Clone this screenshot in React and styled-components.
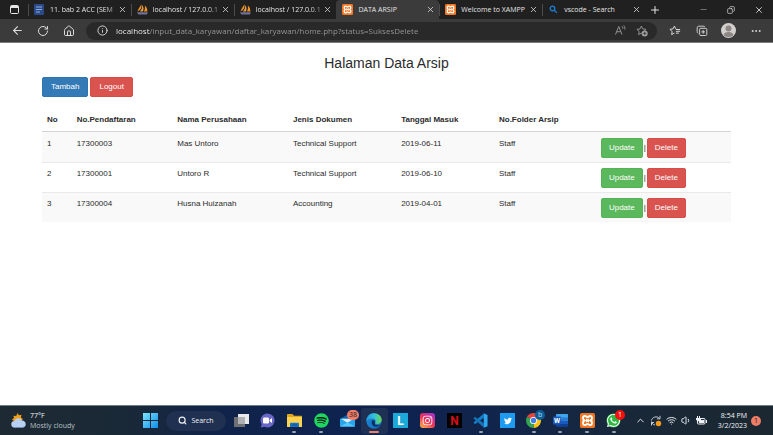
import React from "react";
import styled, { createGlobalStyle, css } from "styled-components";
import {
  ArrowLeft, RotateCw, House, Info, Plus, Minus, X, Search, Ellipsis,
  ChevronUp, Wifi, Volume1, Copy,
} from "lucide-react";
import { FaSpotify, FaWhatsapp, FaTwitter, FaInstagram } from "react-icons/fa";

const Global = createGlobalStyle`
  * { box-sizing: border-box; }
  body { margin: 0; background: #fff; }
  button { border: 0; padding: 0; background: none; color: inherit; font: inherit; cursor: pointer; }
  svg { display: block; flex: none; }
`;

const uiFont = css`
  font-family: "Open Sans", "Noto Sans", sans-serif;
`;

const Screen = styled.div`
  display: flex;
  flex-direction: column;
  min-height: 100vh;
`;

/* ---------- Browser chrome ---------- */

const TabStrip = styled.header`
  ${uiFont}
  display: flex;
  align-items: center;
  height: 19px;
  background: #202020;
  color: #e4e4e4;
  font-size: 7px;
`;

const StripButton = styled.button`
  display: grid;
  place-items: center;
  width: ${(p) => p.$width}px;
  height: 19px;
`;

const TabList = styled.nav`
  display: flex;
  flex: 0 1 617px;
  min-width: 0;
  height: 19px;
  align-items: center;
`;

const Tab = styled.div`
  display: flex;
  align-items: center;
  flex: 1 1 0;
  min-width: 0;
  height: ${(p) => (p.$active ? 19 : 12)}px;
  padding: 0 4px 0 5px;
  border-left: 1px solid ${(p) => (p.$active ? "#3b3b3b" : "#4c4c4c")};
  border-radius: ${(p) => (p.$active ? "4px 4px 0 0" : "0")};
  background: ${(p) => (p.$active ? "#3b3b3b" : "transparent")};
`;

const TabTitle = styled.button`
  flex: 1;
  min-width: 0;
  margin-left: 5px;
  white-space: nowrap;
  text-align: left;
  line-height: 12px;
  ${(p) => p.$faded && css`mask-image: linear-gradient(90deg, #000 80%, #0004);`}
`;

const WindowControls = styled.div`
  display: flex;
  margin-left: auto;
`;

const Toolbar = styled.div`
  ${uiFont}
  display: flex;
  align-items: center;
  height: 24px;
  padding: 0 4px;
  gap: 4px;
  background: #3b3b3b;
  border-bottom: 1px solid #7d7d7d;
  color: #dcdcdc;
`;

const ToolGroup = styled.div`
  display: grid;
  grid-auto-flow: column;
  grid-auto-columns: ${(p) => p.$step}px;
  place-items: center;
`;

const ToolButton = styled.button`
  display: grid;
  place-items: center;
  width: 18px;
  height: 18px;
`;

const AddressBar = styled.form`
  display: flex;
  align-items: center;
  flex: 1;
  min-width: 0;
  height: 18px;
  padding: 0 4px 0 11px;
  gap: 8px;
  border-radius: 9px;
  background: #292929;
`;

const AddressInput = styled.input`
  flex: 1;
  min-width: 0;
  border: 0;
  padding: 0;
  outline: 0;
  font-family: inherit;
  font-size: 8px;
  line-height: 14px;
  color: transparent;
  background: linear-gradient(90deg, #fff 34px, #9a9a9a 34px);
  background-clip: text;
`;

const AddressTools = styled(ToolGroup)`
  color: #9d9d9d;
`;

/* ---------- Page ---------- */

const Page = styled.main`
  flex: 1;
  padding: 12px 42px;
  background: #fff;
  color: #2b2b2b;
  font-family: "Liberation Sans", Arial, sans-serif;
  font-size: 8px;
  line-height: 12px;
`;

const Heading = styled.h1`
  margin: 0 0 6px;
  font-size: 14px;
  font-weight: 400;
  line-height: 16px;
  text-align: center;
`;

const Actions = styled.div`
  display: flex;
  align-items: center;
  gap: ${(p) => p.$gap}px;
`;

const tones = {
  primary: ["#337ab7", "#2e74ae"],
  danger: ["#d9534f", "#d84b47"],
  success: ["#5cb85c", "#55b355"],
};

const Button = styled.button`
  height: 20px;
  padding: 0 ${(p) => (p.$wide ? 8 : 7)}px;
  border: 1px solid ${(p) => tones[p.$tone][1]};
  border-radius: 2px;
  background: ${(p) => tones[p.$tone][0]};
  color: #fff;
`;

const Table = styled.table`
  width: 100%;
  margin-top: 11px;
  table-layout: fixed;
  border-collapse: separate;
  border-spacing: 0;
`;

const Col = styled.col`
  width: ${(p) => p.$share}%;
`;

const HeadCell = styled.th`
  padding: 6px 5px 5px;
  border-bottom: 1px solid #d4d4d4;
  text-align: left;
  white-space: nowrap;
`;

const Row = styled.tr`
  &:nth-child(odd) { background: #f9f9f9; }
  & + & > td { border-top-color: #e9e9e9; }
`;

const Cell = styled.td`
  padding: 5px 5px 4px;
  border-top: 1px solid transparent;
  vertical-align: top;
`;

/* ---------- Taskbar ---------- */

const Taskbar = styled.footer`
  ${uiFont}
  display: flex;
  align-items: center;
  height: 30px;
  border-top: 1px solid #6d7f86;
  background: linear-gradient(90deg, #1d2a33 0%, #1a2937 16%, #10244a 28%, #0d2250 50%, #12254a 66%, #192838 82%, #1b2831 100%);
  color: #f2f4f6;
  font-size: 7px;
  line-height: 10px;
`;

const Weather = styled.button`
  display: flex;
  align-items: center;
  flex: 1 1 137px;
  gap: 4px;
  padding-left: 11px;
  text-align: left;
`;

const Dim = styled.span`
  color: #b9c2c9;
`;

const Lines = styled.span`
  display: grid;
  justify-items: ${(p) => p.$align || "start"};
`;

const Launcher = styled.nav`
  display: flex;
  align-items: center;
`;

const SearchPill = styled.button`
  display: flex;
  align-items: center;
  justify-content: center;
  gap: 4px;
  width: 60px;
  height: 20px;
  margin: 0 2px 0 3px;
  border-radius: 10px;
  background: #1f3050;
`;

const AppGrid = styled.div`
  display: grid;
  grid-template-columns: repeat(15, 1fr);
  width: 399px;
`;

const AppButton = styled.button`
  position: relative;
  display: grid;
  place-items: center;
  height: 26px;
  border-radius: 3px;
  background: ${(p) => (p.$state === "active" ? "#1e3053" : "transparent")};
  &::after {
    content: "";
    display: ${(p) => (p.$state ? "block" : "none")};
    position: absolute;
    bottom: 1px;
    left: 50%;
    translate: -50% 0;
    width: ${(p) => (p.$state === "active" ? 10 : 4)}px;
    height: 2px;
    border-radius: 1px;
    background: ${(p) => (p.$state === "active" ? "#ef8168" : "#98a2b0")};
  }
`;

const StartButton = styled.button`
  display: grid;
  place-items: center;
  width: 26px;
  height: 26px;
`;

const AppBadge = styled.span`
  position: absolute;
  top: 2px;
  right: 2px;
  min-width: 10px;
  height: 10px;
  padding: 0 2px;
  border-radius: 5px;
  background: ${(p) => p.$bg};
  color: ${(p) => p.$fg};
  text-align: center;
  z-index: 1;
`;

const Tray = styled.div`
  display: flex;
  align-items: center;
  justify-content: flex-end;
  flex: 1 1 146px;
  gap: 4px;
  padding-right: 12px;
`;

const Clock = styled.button`
  text-align: right;
  margin-left: 7px;
`;

const Notice = styled.button`
  width: 10px;
  height: 10px;
  border-radius: 5px;
  background: #ef7c66;
  color: #222;
`;

/* ---------- Drawings ---------- */

const DocIcon = () => (
  <svg width="11" height="11" viewBox="0 0 11 11">
    <rect width="10" height="11" rx="1" fill="#2b4a8a" />
    <path d="M2 3h6M2 5.500h6M2 8h4" stroke="#8fa9d8" />
  </svg>
);

const SailIcon = () => (
  <svg width="11" height="11" viewBox="0 0 11 11">
    <path d="M4.300 .5C5 3 4 6 .5 7.500 1.200 5 2.800 3 4.300 .5z" fill="#f0921e" />
    <path d="M5 1C6.800 3 7 5.500 5.800 7.500H2.800C5 5.500 5.500 3 5 1z" fill="#e9a04c" />
    <path d="M7.800 1.500c2 1.600 2.700 3.800 2.500 6H6.800C8 6 8.200 4 7.800 1.500z" fill="#f0921e" />
    <path d="M0 8.200h11L9.800 10.500H1.400z" fill="#70729c" />
  </svg>
);

const XamppIcon = ({ size }) => (
  <svg width={size} height={size} viewBox="0 0 16 16">
    <rect width="16" height="16" rx="2" fill="#f37623" />
    <path
      d="M5.200 8C2.500 7.500 2.500 3.200 5.200 3.200c1.700 0 2 1.300 2.800 1.300s1.100-1.300 2.800-1.300c2.700 0 2.700 4.300 0 4.800 2.700.5 2.700 4.800 0 4.800-1.700 0-2-1.300-2.800-1.300s-1.100 1.300-2.800 1.300C2.500 12.800 2.500 8.500 5.200 8z"
      fill="none" stroke="#fff" strokeWidth="1.900"
    />
    <path d="M5.500 8h5M6.500 6.300l3 3.400M9.500 6.300l-3 3.400" stroke="#fff" strokeWidth="1.200" />
  </svg>
);

const BingIcon = () => (
  <svg width="11" height="11" viewBox="0 0 11 11" fill="none" stroke="#1b7fd6" strokeWidth="1.300">
    <circle cx="4.500" cy="4.500" r="2.300" />
    <path d="M6.300 6.300l2.600 2.600" />
  </svg>
);

const TabActionsIcon = () => (
  <svg width="9" height="9" viewBox="0 0 9 9">
    <rect x=".5" y=".5" width="8" height="8" rx="1" fill="none" stroke="#e8e8e8" />
    <path d="M1 1h7v2H1z" fill="#e8e8e8" />
  </svg>
);

const ReadAloudIcon = () => (
  <svg width="11" height="11" viewBox="0 0 22 22" fill="none" stroke="currentColor" strokeWidth="1.800">
    <path d="M1 19L7.500 3 14 19M3.500 13.500h8M14 2.500c1.500 1.200 2 3 1.700 5M17.500 1c2 2 2.700 5 2 8" />
  </svg>
);

const star = "M9 1.800l2.300 4.700 5.200.7-3.800 3.600.9 5.200L9 13.500 4.400 16l.9-5.200L1.500 7.200l5.200-.7z";

const AddFavoriteIcon = () => (
  <svg width="12" height="12" viewBox="0 0 20 20">
    <path d={star} fill="none" stroke="currentColor" strokeWidth="1.500" />
    <circle cx="14.500" cy="14" r="5" fill="currentColor" />
    <path d="M14.500 11.500v5M12 14h5" stroke="#292929" strokeWidth="1.300" />
  </svg>
);

const FavoritesIcon = () => (
  <svg width="12" height="12" viewBox="0 0 20 20" fill="none" stroke="currentColor" strokeWidth="1.600">
    <path d="M9 13.500L4.400 16l.9-5.200L1.500 7.200l5.200-.7L9 1.800l2.300 4.700M11.500 7.500h7M11.500 10.500h7M11.500 13.500h5" />
  </svg>
);

const CollectionsIcon = () => (
  <svg width="12" height="12" viewBox="0 0 20 20" fill="none" stroke="currentColor" strokeWidth="1.500">
    <rect x="6" y="5.500" width="12" height="12" rx="2" />
    <path d="M12 8.500v6M9 11.500h6M3.500 14C1.500 13 2 10 2 5c0-2 1-3 3-3h7c1.500 0 2.500.5 3 1.500" />
  </svg>
);

const Avatar = () => (
  <svg width="15" height="15" viewBox="0 0 15 15">
    <circle cx="7.500" cy="7.500" r="7.500" fill="#d4d0cd" />
    <circle cx="7.500" cy="5.500" r="3" fill="#8d8885" />
    <path d="M2.500 12c.5-4 9.500-4 10 0-2.500 2.700-7.500 2.700-10 0z" fill="#8d8885" />
  </svg>
);

const WeatherIcon = () => (
  <svg width="15" height="15" viewBox="0 0 15 15">
    <path d="M6.500 0l1.400 2.200 2.600-.4-.6 2.600L12 6 9 9H4L1 6.500l2-1.400-.5-2.400 2.700.2z" fill="#f0a01f" />
    <path d="M3.500 14.500a3.200 3.200 0 010-6.400C4.200 4.500 9.500 4 10.700 7.600c5.200-.2 5.300 6.900.8 6.900z" fill="#b8d0f2" />
    <path d="M1 12.700c1.500 2.200 11 2.200 13 0-.4 1.200-1.500 1.800-2.700 1.800h-8c-1 0-1.900-.8-2.300-1.800z" fill="#80a8e4" />
  </svg>
);

const StartIcon = () => (
  <svg width="15" height="15" viewBox="0 0 15 15">
    <defs>
      <linearGradient id="start" x1="0" y1="0" x2="1" y2="1">
        <stop stopColor="#7be5fb" /><stop offset="1" stopColor="#0c8ee8" />
      </linearGradient>
    </defs>
    <path d="M0 0h7v7H0zM8 0h7v7H8zM0 8h7v7H0zM8 8h7v7H8z" fill="url(#start)" />
  </svg>
);

const TaskViewIcon = () => (
  <svg width="15" height="15" viewBox="0 0 15 15">
    <path d="M4 1h11v10H4z" fill="#e9e9e9" />
    <path d="M0 4h11v10H0z" fill="#6e7073" />
    <path d="M4 4h7v7H4z" fill="#aeb0b2" />
  </svg>
);

const ChatIcon = () => (
  <svg width="15" height="15" viewBox="0 0 15 15">
    <path d="M7.500.5a7 7 0 11-3 13.300L.8 14.500l.8-3.300A7 7 0 017.500.5z" fill="#6a67c8" />
    <rect x="3" y="4.500" width="6" height="6" rx="1.200" fill="#fff" />
    <path d="M9.500 7l2.500-2v5L9.500 8z" fill="#fff" />
  </svg>
);

const FolderIcon = () => (
  <svg width="15" height="15" viewBox="0 0 15 15">
    <path d="M0 2c0-.6.4-1 1-1h4.500L7 2.700h7c.6 0 1 .4 1 1V13c0 .6-.4 1-1 1H1c-.6 0-1-.4-1-1z" fill="#e2a51e" />
    <path d="M0 4h15v9c0 .6-.4 1-1 1H1c-.6 0-1-.4-1-1z" fill="#fcd253" />
    <path d="M3 14v-3c0-.8.5-1.300 1.300-1.300h6.400c.8 0 1.300.5 1.300 1.300v3z" fill="#1874c4" />
    <path d="M5 12h5" stroke="#0d4f91" />
  </svg>
);

const MailIcon = () => (
  <svg width="15" height="15" viewBox="0 0 16 15">
    <path d="M0 6l8-5 8 5v8H0z" fill="#1264b0" />
    <path d="M0 5.500h16V13c0 .6-.4 1-1 1H1c-.6 0-1-.4-1-1z" fill="#28a4ec" />
    <path d="M1 5.500L8 10l7-4.500z" fill="#d8ecfa" />
    <path d="M0 14L8 9.500l8 4.500z" fill="#56c8f8" />
  </svg>
);

const EdgeIcon = () => (
  <svg width="16" height="16" viewBox="0 0 16 16">
    <defs>
      <linearGradient id="edgeTop" x1="0" y1=".5" x2="1" y2=".5">
        <stop stopColor="#1d9de0" /><stop offset=".5" stopColor="#35c1df" /><stop offset="1" stopColor="#67d84a" />
      </linearGradient>
      <linearGradient id="edgeLow" x1="0" y1="0" x2="1" y2="1">
        <stop stopColor="#1b8bdc" /><stop offset="1" stopColor="#1668b8" />
      </linearGradient>
    </defs>
    <circle cx="8" cy="8" r="7.700" fill="url(#edgeLow)" />
    <path d="M.3 8.300C.4 3.700 3.700.3 8 .3c4.500 0 7.700 3 7.700 6.500 0 2.600-2 4.200-4.300 4.200-1.800 0-2.700-.7-2.200-1.400 1-1.400.3-4.200-2.800-4.200C3.200 5.400.8 6.500.3 8.300z" fill="url(#edgeTop)" />
    <path d="M6.200 7.500c-2 3.500 1.500 7 5.200 6 1.400-.4 2.500-1 3.300-2-2.200 1-5 .8-5.800-.3-.6-.8.500-1.200.2-2.500C8.700 7.300 7 6.800 6.200 7.500z" fill="#10305c" />
  </svg>
);

const LetterTile = ({ bg, fg, letter }) => (
  <svg width="15" height="15" viewBox="0 0 15 15">
    <rect width="15" height="15" fill={bg} />
    <text x="7.500" y="12" textAnchor="middle" fontFamily="Roboto, sans-serif" fontWeight="700" fontSize="12" fill={fg}>{letter}</text>
  </svg>
);

const InstagramIcon = () => (
  <svg width="15" height="15" viewBox="0 0 15 15">
    <defs>
      <linearGradient id="insta" x1=".1" y1="1" x2=".8" y2="0">
        <stop stopColor="#fcb045" /><stop offset=".5" stopColor="#f0305a" /><stop offset="1" stopColor="#a534c4" />
      </linearGradient>
    </defs>
    <rect width="15" height="15" rx="3" fill="url(#insta)" />
    <FaInstagram x="2" y="2" size={11} color="#fff" />
  </svg>
);

const CodeIcon = () => (
  <svg width="15" height="15" viewBox="0 0 16 16">
    <path d="M11.500.5L.5 10.200l1.700 1.700L11.500 5z" fill="#0f7fc8" />
    <path d="M11.500 15.500L.5 5.800l1.700-1.700L11.500 11z" fill="#1672b4" />
    <path d="M11.500.3L15.500 2v12l-4 1.700z" fill="#2ea7f0" />
  </svg>
);

const TwitterIcon = () => (
  <svg width="15" height="15" viewBox="0 0 15 15">
    <rect width="15" height="15" fill="#1d9bf0" />
    <FaTwitter x="4" y="4" size={8} color="#fff" />
  </svg>
);

const ChromeIcon = () => (
  <svg width="15" height="15" viewBox="0 0 16 16">
    <path d="M8 8L1.100 4A8 8 0 0114.900 4z" fill="#e8453c" />
    <path d="M8 8l6.900-4A8 8 0 018 16z" fill="#fbc116" />
    <path d="M8 8v8A8 8 0 011.100 4z" fill="#34a350" />
    <circle cx="8" cy="8" r="3.800" fill="#fff" />
    <circle cx="8" cy="8" r="2.900" fill="#3f7fe8" />
  </svg>
);

const WordIcon = () => (
  <svg width="15" height="15" viewBox="0 0 15 15">
    <path d="M4 1h10c.6 0 1 .4 1 1v3H3V2c0-.6.4-1 1-1z" fill="#41a5ee" />
    <path d="M3 4.500h12v3.500H3z" fill="#2b7cd3" />
    <path d="M3 8h12v3H3z" fill="#185abd" />
    <path d="M3 11h12v2c0 .6-.4 1-1 1H4c-.6 0-1-.4-1-1z" fill="#103f91" />
    <rect y="3.500" width="8" height="8" rx="1" fill="#185abd" />
    <text x="4" y="10" textAnchor="middle" fontFamily="Roboto, sans-serif" fontWeight="700" fontSize="7" fill="#fff">W</text>
  </svg>
);

const WhatsAppIcon = () => (
  <svg width="15" height="15" viewBox="0 0 15 15">
    <circle cx="7.500" cy="7.500" r="7" fill="#2bb741" />
    <FaWhatsapp size={15} color="#eefbef" />
  </svg>
);

const SpotifyIcon = () => (
  <svg width="15" height="15" viewBox="0 0 15 15">
    <circle cx="7.500" cy="7.500" r="7" fill="#0d1c1c" />
    <FaSpotify size={15} color="#1ed760" />
  </svg>
);

const SyncIcon = () => (
  <svg width="12" height="12" viewBox="0 0 12 12" fill="none" stroke="#c3cbd0">
    <path d="M1.500 5.500C2 2 7 .5 9.500 3.500M10 .8v3H7M1.500 6.500C2 8.500 3 9.700 5 10M1.500 10.500v-3h2.500" />
    <circle cx="8.500" cy="8.500" r="2.700" fill="#f79a1c" stroke="none" />
  </svg>
);

const BatteryIcon = () => (
  <svg width="11" height="10" viewBox="0 0 11 10">
    <rect x="1.500" y="2.500" width="7.500" height="5.500" rx="1" fill="none" stroke="#eef1f3" />
    <path d="M5 4h3v3H3V5zM10 4h1v3h-1zM1 0h1v2H1zM3 0h1v2H3zM0 2h5v2L3 5.500 0 4z" fill="#eef1f3" />
  </svg>
);

/* ---------- Data ---------- */

const tabs = [
  { title: "11. bab 2 ACC (SEM", icon: <DocIcon />, faded: true },
  { title: "localhost / 127.0.0.1", icon: <SailIcon />, faded: true },
  { title: "localhost / 127.0.0.1", icon: <SailIcon />, faded: true },
  { title: "DATA ARSIP", icon: <XamppIcon size={11} />, active: true },
  { title: "Welcome to XAMPP", icon: <XamppIcon size={11} /> },
  { title: "vscode - Search", icon: <BingIcon /> },
];

const columns = [
  ["No", 4.3],
  ["No.Pendaftaran", 14.6],
  ["Nama Perusahaan", 16.8],
  ["Jenis Dokumen", 15.7],
  ["Tanggal Masuk", 14.2],
  ["No.Folder Arsip", 14.8],
  ["", 19.6],
];

const records = [
  ["1", "17300003", "Mas Untoro", "Technical Support", "2019-06-11", "Staff"],
  ["2", "17300001", "Untoro R", "Technical Support", "2019-06-10", "Staff"],
  ["3", "17300004", "Husna Huizanah", "Accounting", "2019-04-01", "Staff"],
];

const apps = [
  { name: "Task view", icon: <TaskViewIcon /> },
  { name: "Chat", icon: <ChatIcon /> },
  { name: "File Explorer", icon: <FolderIcon />, state: "open" },
  { name: "Spotify", icon: <SpotifyIcon />, state: "open" },
  { name: "Mail", icon: <MailIcon />, badge: { text: "38", bg: "#ef7c66", fg: "#222" } },
  { name: "Edge", icon: <EdgeIcon />, state: "active" },
  { name: "Lightshot", icon: <LetterTile bg="#1ba9d8" fg="#fff" letter="L" /> },
  { name: "Instagram", icon: <InstagramIcon /> },
  { name: "Netflix", icon: <LetterTile bg="#000" fg="#d9101b" letter="N" /> },
  { name: "Visual Studio Code", icon: <CodeIcon />, state: "open" },
  { name: "Twitter", icon: <TwitterIcon /> },
  { name: "Chrome", icon: <ChromeIcon />, state: "open", badge: { text: "b", bg: "#0b5d97", fg: "#bcd8ea" } },
  { name: "Word", icon: <WordIcon />, state: "open" },
  { name: "XAMPP", icon: <XamppIcon size={15} />, state: "open" },
  { name: "WhatsApp", icon: <WhatsAppIcon />, state: "open", badge: { text: "1", bg: "#f40f0f", fg: "#fff" } },
];

export default function App() {
  return (
    <Screen>
      <Global />
      <TabStrip>
        <StripButton $width={28} aria-label="Tab actions"><TabActionsIcon /></StripButton>
        <TabList aria-label="Tabs">
          {tabs.map((t, i) => (
            <Tab key={i} $active={t.active}>
              {t.icon}
              <TabTitle $faded={t.faded}>{t.title}</TabTitle>
              <button aria-label={`Close ${t.title}`}><X size={9} /></button>
            </Tab>
          ))}
        </TabList>
        <StripButton $width={20} aria-label="New tab"><Plus size={12} /></StripButton>
        <WindowControls>
          <StripButton $width={28} aria-label="Minimize"><Minus size={9} color="#8a8a8a" /></StripButton>
          <StripButton $width={28} aria-label="Restore"><Copy size={8} transform="scale(-1 1)" /></StripButton>
          <StripButton $width={28} aria-label="Close"><X size={10} /></StripButton>
        </WindowControls>
      </TabStrip>

      <Toolbar>
        <ToolGroup $step={26}>
          <ToolButton aria-label="Back"><ArrowLeft size={13} /></ToolButton>
          <ToolButton aria-label="Reload"><RotateCw size={12} /></ToolButton>
          <ToolButton aria-label="Home"><House size={12} /></ToolButton>
        </ToolGroup>
        <AddressBar onSubmit={(e) => e.preventDefault()}>
          <Info size={11} />
          <AddressInput
            aria-label="Address"
            spellCheck={false}
            defaultValue="localhost/input_data_karyawan/daftar_karyawan/home.php?status=SuksesDelete"
          />
          <AddressTools $step={22}>
            <ToolButton type="button" aria-label="Read aloud"><ReadAloudIcon /></ToolButton>
            <ToolButton type="button" aria-label="Add to favorites"><AddFavoriteIcon /></ToolButton>
          </AddressTools>
        </AddressBar>
        <ToolGroup $step={27}>
          <ToolButton aria-label="Favorites"><FavoritesIcon /></ToolButton>
          <ToolButton aria-label="Collections"><CollectionsIcon /></ToolButton>
          <ToolButton aria-label="Profile"><Avatar /></ToolButton>
          <ToolButton aria-label="Settings and more"><Ellipsis size={12} /></ToolButton>
        </ToolGroup>
      </Toolbar>

      <Page>
        <Heading>Halaman Data Arsip</Heading>
        <Actions $gap={2}>
          <Button $tone="primary" $wide>Tambah</Button>
          <Button $tone="danger" $wide>Logout</Button>
        </Actions>
        <Table>
          <colgroup>
            {columns.map(([label, share]) => <Col key={label} $share={share} />)}
          </colgroup>
          <thead>
            <tr>{columns.map(([label]) => <HeadCell key={label} scope="col">{label}</HeadCell>)}</tr>
          </thead>
          <tbody>
            {records.map((r) => (
              <Row key={r[0]}>
                {r.map((v, i) => <Cell key={i}>{v}</Cell>)}
                <Cell>
                  <Actions $gap={1}>
                    <Button $tone="success">Update</Button>
                    <span>|</span>
                    <Button $tone="danger">Delete</Button>
                  </Actions>
                </Cell>
              </Row>
            ))}
          </tbody>
        </Table>
      </Page>

      <Taskbar>
        <Weather>
          <WeatherIcon />
          <Lines>
            <span>77°F</span>
            <Dim>Mostly cloudy</Dim>
          </Lines>
        </Weather>
        <Launcher aria-label="Applications">
          <StartButton aria-label="Start"><StartIcon /></StartButton>
          <SearchPill><Search size={9} strokeWidth={3} />Search</SearchPill>
          <AppGrid>
            {apps.map((a) => (
              <AppButton key={a.name} aria-label={a.name} $state={a.state}>
                {a.icon}
                {a.badge && <AppBadge $bg={a.badge.bg} $fg={a.badge.fg}>{a.badge.text}</AppBadge>}
              </AppButton>
            ))}
          </AppGrid>
        </Launcher>
        <Tray>
          <ChevronUp size={11} />
          <SyncIcon />
          <Wifi size={11} />
          <Volume1 size={11} />
          <BatteryIcon />
          <Clock>
            <Lines $align="end">
              <span>8:54 PM</span>
              <span>3/2/2023</span>
            </Lines>
          </Clock>
          <Notice aria-label="1 notification">1</Notice>
        </Tray>
      </Taskbar>
    </Screen>
  );
}
